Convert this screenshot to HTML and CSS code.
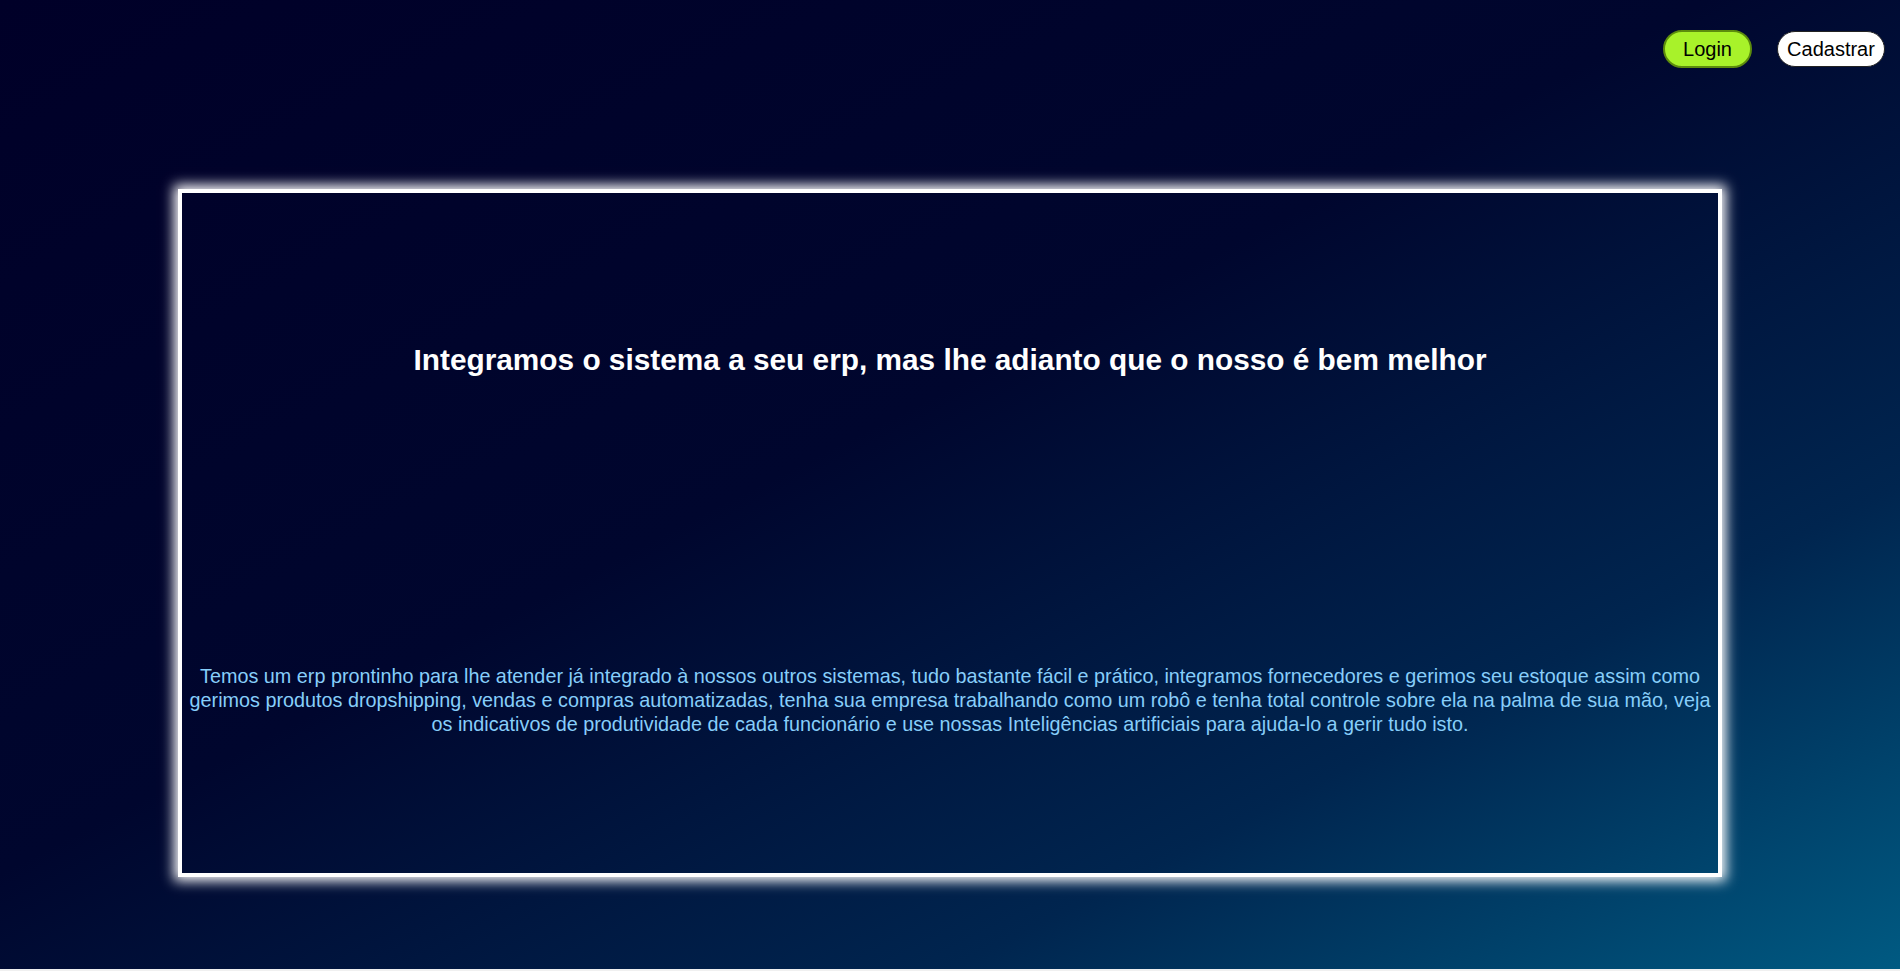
FILE: index.html
```html
<!DOCTYPE html>
<html lang="pt-BR">
<head>
<meta charset="utf-8">
<title>ERP</title>
<link rel="stylesheet" href="styles.css">
</head>
<body>
<div class="page">
  <header class="topbar">
    <button class="btn btn-login">Login</button>
    <button class="btn btn-signup">Cadastrar</button>
  </header>
  <main class="hero">
    <section class="card">
      <h1 class="card-title">Integramos o sistema a seu erp, mas lhe adianto que o nosso é bem melhor</h1>
      <p class="card-text">Temos um erp prontinho para lhe atender já integrado à nossos outros sistemas, tudo bastante fácil e prático, integramos fornecedores e gerimos seu estoque assim como gerimos produtos dropshipping, vendas e compras automatizadas, tenha sua empresa trabalhando como um robô e tenha total controle sobre ela na palma de sua mão, veja os indicativos de produtividade de cada funcionário e use nossas Inteligências artificiais para ajuda-lo a gerir tudo isto.</p>
    </section>
  </main>
</div>
</body>
</html>
```
FILE: styles.css
```css
html, body {
  margin: 0;
  padding: 0;
  background: #f0f0f0;
}
.page {
  height: 969px;
  background: linear-gradient(to bottom right, #000028 0%, #00062e 45%, #00254f 75%, #005a82 100%);
  font-family: "Liberation Sans", Arial, sans-serif;
  display: flex;
  flex-direction: column;
}
.topbar {
  display: flex;
  justify-content: flex-end;
  align-items: center;
  gap: 25px;
  padding: 30px 15px 0 0;
  height: 38px;
}
.btn {
  font-family: "Liberation Sans", Arial, sans-serif;
  font-size: 20px;
  color: #000;
  border-radius: 19px;
  cursor: pointer;
}
.btn-login {
  width: 89px;
  height: 38px;
  background: #a8f22a;
  border: 2px solid #5c8c0c;
}
.btn-signup {
  width: 108px;
  height: 36px;
  background: #fff;
  border: 1px solid #222;
}
.hero {
  display: flex;
  justify-content: center;
  padding-top: 121px;
}
.card {
  width: 1536px;
  height: 680px;
  border: 4px solid #fff;
  box-shadow: 0 0 12px 4px #fff;
  display: flex;
  flex-direction: column;
  align-items: center;
  box-sizing: content-box;
}
.card-title {
  margin: 150px 0 0;
  color: #fff;
  font-size: 29.8px;
  font-weight: bold;
  line-height: 34px;
  text-align: center;
}
.card-text {
  margin: 287px 0 0;
  padding: 0;
  color: #87cefa;
  font-size: 19.8px;
  line-height: 24px;
  text-align: center;
}
```
